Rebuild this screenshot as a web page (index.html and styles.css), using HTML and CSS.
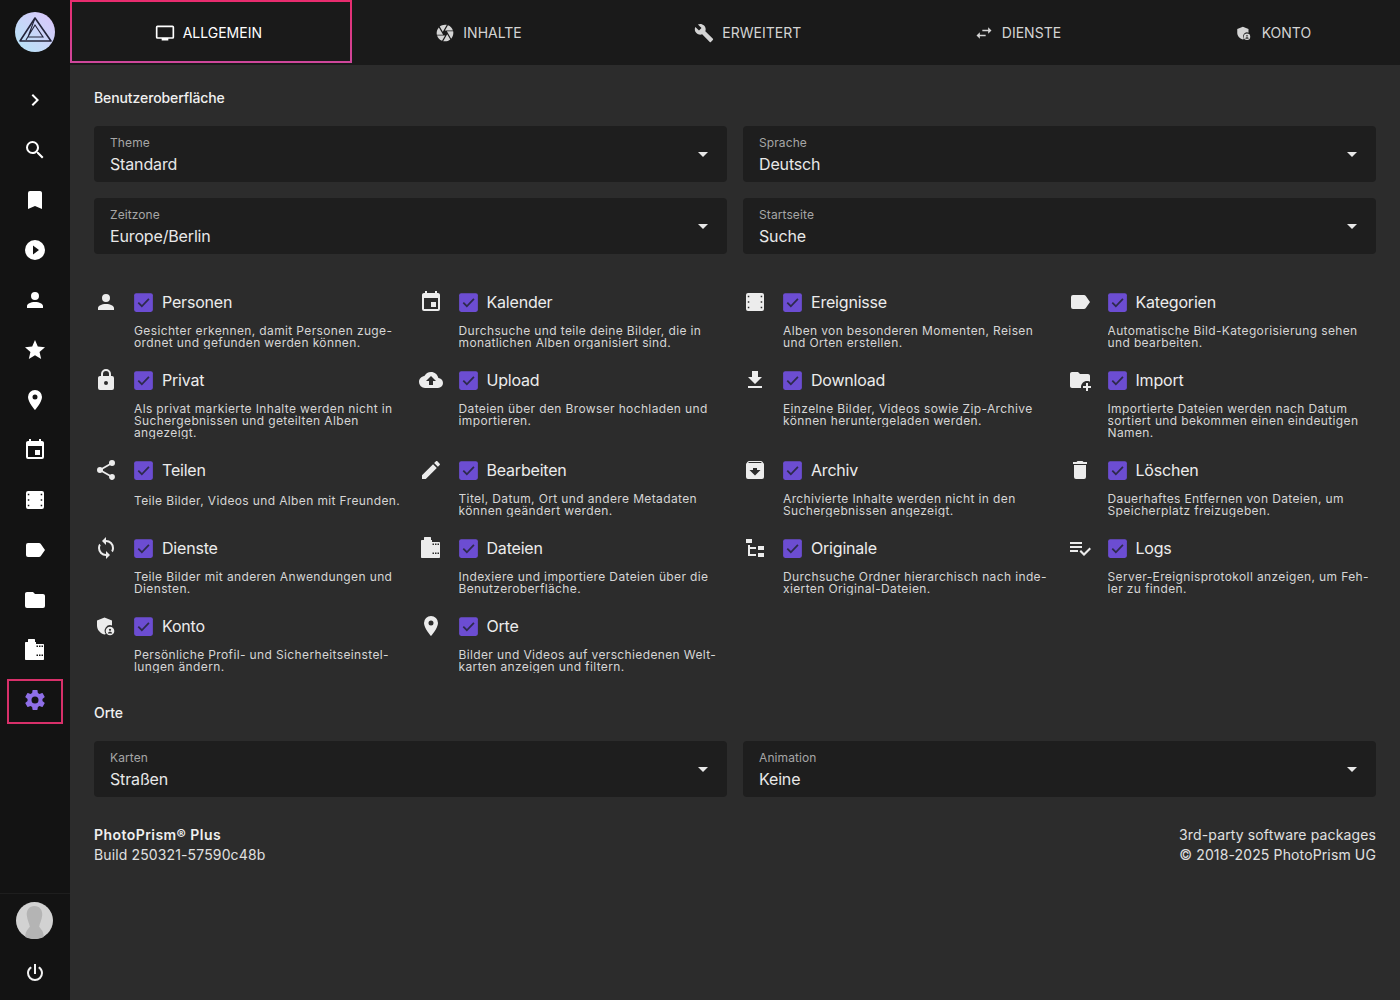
FILE: index.html
```html
<!DOCTYPE html>
<html lang="de">
<head>
    <meta charset="UTF-8">
    <title>PhotoPrism Einstellungen</title>
    <link rel="stylesheet" href="styles.css">
</head>
<body>
<svg class="sprite" xmlns="http://www.w3.org/2000/svg">
    <symbol id="i-chevron" viewBox="0 0 24 24"><path d="M8.59,16.58L13.17,12L8.59,7.41L10,6L16,12L10,18L8.59,16.58Z"/></symbol>
    <symbol id="i-search" viewBox="0 0 24 24"><path d="M9.5,3A6.5,6.5 0 0,1 16,9.5C16,11.11 15.41,12.59 14.44,13.73L14.71,14H15.5L20.5,19L19,20.5L14,15.5V14.71L13.73,14.44C12.59,15.41 11.11,16 9.5,16A6.5,6.5 0 0,1 3,9.5A6.5,6.5 0 0,1 9.5,3M9.5,5C7,5 5,7 5,9.5C5,12 7,14 9.5,14C12,14 14,12 14,9.5C14,7 12,5 9.5,5Z"/></symbol>
    <symbol id="i-bookmark" viewBox="0 0 24 24"><path d="M17,3H7A2,2 0 0,0 5,5V21L12,18L19,21V5C19,3.89 18.1,3 17,3Z"/></symbol>
    <symbol id="i-play" viewBox="0 0 24 24"><path d="M10,16.5V7.5L16,12M12,2A10,10 0 0,0 2,12A10,10 0 0,0 12,22A10,10 0 0,0 22,12A10,10 0 0,0 12,2Z"/></symbol>
    <symbol id="i-person" viewBox="0 0 24 24"><path d="M12,4A4,4 0 0,1 16,8A4,4 0 0,1 12,12A4,4 0 0,1 8,8A4,4 0 0,1 12,4M12,14C16.42,14 20,15.79 20,18V20H4V18C4,15.79 7.58,14 12,14Z"/></symbol>
    <symbol id="i-star" viewBox="0 0 24 24"><path d="M12,17.27L18.18,21L16.54,13.97L22,9.24L14.81,8.62L12,2L9.19,8.62L2,9.24L7.45,13.97L5.82,21L12,17.27Z"/></symbol>
    <symbol id="i-marker" viewBox="0 0 24 24"><path d="M12,11.5A2.5,2.5 0 0,1 9.5,9A2.5,2.5 0 0,1 12,6.5A2.5,2.5 0 0,1 14.5,9A2.5,2.5 0 0,1 12,11.5M12,2A7,7 0 0,0 5,9C5,14.25 12,22 12,22C12,22 19,14.25 19,9A7,7 0 0,0 12,2Z"/></symbol>
    <symbol id="i-calendar" viewBox="0 0 24 24"><path d="M19 19H5V8H19M16 1V3H8V1H6V3H5C3.89 3 3 3.89 3 5V19A2 2 0 0 0 5 21H19A2 2 0 0 0 21 19V5C21 3.89 20.1 3 19 3H18V1M17 12H12V17H17V12Z"/></symbol>
    <symbol id="i-movie" viewBox="0 0 24 24"><path fill-rule="evenodd" d="M5 3H19A2 2 0 0 1 21 5V19A2 2 0 0 1 19 21H5A2 2 0 0 1 3 19V5A2 2 0 0 1 5 3ZM4.8 5.8V7.3H6.3V5.8ZM4.8 11.25V12.75H6.3V11.25ZM4.8 16.7V18.2H6.3V16.7ZM17.7 5.8V7.3H19.2V5.8ZM17.7 11.25V12.75H19.2V11.25ZM17.7 16.7V18.2H19.2V16.7Z"/></symbol>
    <symbol id="i-label" viewBox="0 0 24 24"><path d="M17.63,5.84C17.27,5.33 16.67,5 16,5H5A2,2 0 0,0 3,7V17A2,2 0 0,0 5,19H16C16.67,19 17.27,18.66 17.63,18.15L22,12L17.63,5.84Z"/></symbol>
    <symbol id="i-folder" viewBox="0 0 24 24"><path d="M10,4H4C2.89,4 2,4.89 2,6V18A2,2 0 0,0 4,20H20A2,2 0 0,0 22,18V8C22,6.89 21.1,6 20,6H12L10,4Z"/></symbol>
    <symbol id="i-folder-plus" viewBox="0 0 24 24"><path d="M13 19C13 19.34 13.04 19.67 13.09 20H4C2.9 20 2 19.11 2 18V6C2 4.89 2.89 4 4 4H10L12 6H20C21.1 6 22 6.89 22 8V13.81C21.39 13.46 20.72 13.22 20 13.09C19.67 13.04 19.34 13 19 13C15.69 13 13 15.69 13 19M20 18V15H18V18H15V20H18V23H20V20H23V18H20Z"/></symbol>
    <symbol id="i-film" viewBox="0 0 24 24"><path fill-rule="evenodd" d="M3 4H5V1.6C5 1.3 5.3 1 5.6 1H11.4C11.7 1 12 1.3 12 1.6V4H13V6H20C20.6 6 21 6.4 21 7V21C21 21.6 20.6 22 20 22H3C2.4 22 2 21.6 2 21V5C2 4.4 2.4 4 3 4ZM13.5 7.5V9H15V7.5ZM16 7.5V9H17.5V7.5ZM18.5 7.5V9H20V7.5ZM13.5 16.5V18H15V16.5ZM16 16.5V18H17.5V16.5ZM18.5 16.5V18H20V16.5Z"/></symbol>
    <symbol id="i-cog" viewBox="0 0 24 24"><path d="M12,15.5A3.5,3.5 0 0,1 8.5,12A3.5,3.5 0 0,1 12,8.5A3.5,3.5 0 0,1 15.5,12A3.5,3.5 0 0,1 12,15.5M19.43,12.97C19.47,12.65 19.5,12.33 19.5,12C19.5,11.67 19.47,11.34 19.43,11L21.54,9.37C21.73,9.22 21.78,8.95 21.66,8.73L19.66,5.27C19.54,5.05 19.27,4.96 19.05,5.05L16.56,6.05C16.04,5.66 15.5,5.32 14.87,5.07L14.5,2.42C14.46,2.18 14.25,2 14,2H10C9.75,2 9.54,2.18 9.5,2.42L9.13,5.07C8.5,5.32 7.96,5.66 7.44,6.05L4.95,5.05C4.73,4.96 4.46,5.05 4.34,5.27L2.34,8.73C2.21,8.95 2.27,9.22 2.46,9.37L4.57,11C4.53,11.34 4.5,11.67 4.5,12C4.5,12.33 4.53,12.65 4.57,12.97L2.46,14.63C2.27,14.78 2.21,15.05 2.34,15.27L4.34,18.73C4.46,18.95 4.73,19.03 4.95,18.95L7.44,17.94C7.96,18.34 8.5,18.68 9.13,18.93L9.5,21.58C9.54,21.82 9.75,22 10,22H14C14.25,22 14.46,21.82 14.5,21.58L14.87,18.93C15.5,18.67 16.04,18.34 16.56,17.94L19.05,18.95C19.27,19.03 19.54,18.95 19.66,18.73L21.66,15.27C21.78,15.05 21.73,14.78 21.54,14.63L19.43,12.97Z"/></symbol>
    <symbol id="i-power" viewBox="0 0 24 24"><path d="M16.56,5.44L15.11,6.89C16.84,7.94 18,9.83 18,12A6,6 0 0,1 12,18A6,6 0 0,1 6,12C6,9.83 7.16,7.94 8.88,6.88L7.44,5.44C5.36,6.88 4,9.28 4,12A8,8 0 0,0 12,20A8,8 0 0,0 20,12C20,9.28 18.64,6.88 16.56,5.44M13,3H11V13H13"/></symbol>
    <symbol id="i-lock" viewBox="0 0 24 24"><path d="M12,17A2,2 0 0,0 14,15C14,13.89 13.1,13 12,13A2,2 0 0,0 10,15A2,2 0 0,0 12,17M18,8A2,2 0 0,1 20,10V20A2,2 0 0,1 18,22H6A2,2 0 0,1 4,20V10C4,8.89 4.9,8 6,8H7V6A5,5 0 0,1 12,1A5,5 0 0,1 17,6V8H18M12,3A3,3 0 0,0 9,6V8H15V6A3,3 0 0,0 12,3Z"/></symbol>
    <symbol id="i-share" viewBox="0 0 24 24"><path d="M18,16.08C17.24,16.08 16.56,16.38 16.04,16.85L8.91,12.7C8.96,12.47 9,12.24 9,12C9,11.76 8.96,11.53 8.91,11.3L15.96,7.19C16.5,7.69 17.21,8 18,8A3,3 0 0,0 21,5A3,3 0 0,0 18,2A3,3 0 0,0 15,5C15,5.24 15.04,5.47 15.09,5.7L8.04,9.81C7.5,9.31 6.79,9 6,9A3,3 0 0,0 3,12A3,3 0 0,0 6,15C6.79,15 7.5,14.69 8.04,14.19L15.16,18.34C15.11,18.55 15.08,18.77 15.08,19C15.08,20.61 16.39,21.91 18,21.91C19.61,21.91 20.92,20.61 20.92,19A2.92,2.92 0 0,0 18,16.08Z"/></symbol>
    <symbol id="i-sync" viewBox="0 0 24 24"><path d="M12,18A6,6 0 0,1 6,12C6,11 6.25,10.03 6.7,9.2L5.24,7.74C4.46,8.97 4,10.43 4,12A8,8 0 0,0 12,20V23L16,19L12,15M12,4V1L8,5L12,9V6A6,6 0 0,1 18,12C18,13 17.75,13.97 17.3,14.8L18.76,16.26C19.54,15.03 20,13.57 20,12A8,8 0 0,0 12,4Z"/></symbol>
    <symbol id="i-shield" viewBox="0 0 24 24"><path d="M10.5 3.5L3 6.5V11.5C3 15.7 6 19.3 10.5 20.5C11 20.4 11.4 20.2 11.8 20A5.5 5.5 0 0 1 18 11.5V6.5Z"/><circle cx="16" cy="17" r="4.3"/><circle cx="16" cy="15.8" r="1.1" fill="#2c2c2c"/><path d="M13.8 19.6C14 18.4 14.8 17.8 16 17.8S18 18.4 18.2 19.6Z" fill="#2c2c2c"/></symbol>
    <symbol id="i-cloud" viewBox="0 0 24 24"><path d="M14,13V17H10V13H7L12,8L17,13M19.35,10.03C18.67,6.59 15.64,4 12,4C9.11,4 6.6,5.64 5.35,8.03C2.34,8.36 0,10.9 0,14A6,6 0 0,0 6,20H19A5,5 0 0,0 24,15C24,12.36 21.95,10.22 19.35,10.03Z"/></symbol>
    <symbol id="i-download" viewBox="0 0 24 24"><path d="M5,20H19V18H5M19,9H15V3H9V9H5L12,16L19,9Z"/></symbol>
    <symbol id="i-pencil" viewBox="0 0 24 24"><path d="M20.71,7.04C21.1,6.65 21.1,6 20.71,5.63L18.37,3.29C18,2.9 17.35,2.9 16.96,3.29L15.12,5.12L18.87,8.87M3,17.25V21H6.75L17.81,9.93L14.06,6.18L3,17.25Z"/></symbol>
    <symbol id="i-archive" viewBox="0 0 24 24"><path d="M5.12,5L5.93,4H17.93L18.87,5M12,17.5L6.5,12H10V10H14V12H17.5L12,17.5M20.54,5.23L19.15,3.55C18.88,3.21 18.47,3 18,3H6C5.53,3 5.12,3.21 4.84,3.55L3.46,5.23C3.17,5.57 3,6 3,6.5V19A2,2 0 0,0 5,21H19A2,2 0 0,0 21,19V6.5C21,6 20.83,5.57 20.54,5.23Z"/></symbol>
    <symbol id="i-trash" viewBox="0 0 24 24"><path d="M19,4H15.5L14.5,3H9.5L8.5,4H5V6H19M6,19A2,2 0 0,0 8,21H16A2,2 0 0,0 18,19V7H6V19Z"/></symbol>
    <symbol id="i-tree" viewBox="0 0 24 24"><path d="M3,3H9V7H3V3M15,10H21V14H15V10M15,17H21V21H15V17M13,13H7V18H13V20H7L5,20V9H7V11H13V13Z"/></symbol>
    <symbol id="i-logs" viewBox="0 0 24 24"><path d="M14,10H2V12H14V10M14,6H2V8H14V6M2,16H10V14H2V16M21.5,11.5L23,13L16,20L11.5,15.5L13,14L16,17L21.5,11.5Z"/></symbol>
    <symbol id="i-monitor" viewBox="0 0 24 24"><path d="M21 17H3V5H21M21 3H3A2 2 0 0 0 1 5V17A2 2 0 0 0 3 19H8V21H16V19H21A2 2 0 0 0 23 17V5A2 2 0 0 0 21 3Z"/></symbol>
    <symbol id="i-iris" viewBox="0 0 24 24"><path d="M13.73,15L9.83,21.76C10.53,21.91 11.25,22 12,22C14.4,22 16.6,21.15 18.32,19.75L14.66,13.4M2.46,15C3.38,17.92 5.61,20.26 8.45,21.34L12.12,15M8.54,12L4.64,5.25C3,7 2,9.39 2,12C2,12.68 2.07,13.35 2.2,14H9.69M21.8,10H14.31L14.6,10.5L19.36,18.75C21,16.97 22,14.6 22,12C22,11.31 21.93,10.64 21.8,10M21.54,9C20.62,6.07 18.39,3.74 15.55,2.66L11.88,9M9.4,10.5L14.17,2.24C13.47,2.09 12.75,2 12,2C9.6,2 7.4,2.84 5.68,4.25L9.34,10.6L9.4,10.5Z"/></symbol>
    <symbol id="i-wrench" viewBox="0 0 24 24"><path d="M22.7,19L13.6,9.9C14.5,7.6 14,4.9 12.1,3C10.1,1 7.1,0.6 4.7,1.7L9,6L6,9L1.6,4.7C0.4,7.1 0.9,10.1 2.9,12.1C4.8,14 7.5,14.5 9.8,13.6L18.9,22.7C19.3,23.1 19.9,23.1 20.3,22.7L22.6,20.4C23.1,20 23.1,19.3 22.7,19Z"/></symbol>
    <symbol id="i-swap" viewBox="0 0 24 24"><path d="M21,9L17,5V8H10V10H17V13M7,11L3,15L7,19V16H14V14H7V11Z"/></symbol>
    <symbol id="i-menu-down" viewBox="0 0 24 24"><path d="M7,10L12,15L17,10H7Z"/></symbol>
    <symbol id="i-check" viewBox="0 0 24 24"><rect x="3" y="3" width="18" height="18" rx="2"/><path d="M7 12.2L10.4 15.6L17.2 8.6" fill="none" stroke="#2d2a4c" stroke-width="1.7"/></symbol>
</svg>

<nav class="sidebar">
    <div class="sidebar-logo">
        <svg class="logo" viewBox="0 0 40 40">
            <defs>
                <linearGradient id="logo-bg" x1="0" y1="1" x2="1" y2="0">
                    <stop offset="0" stop-color="#b5e6f7"/>
                    <stop offset="1" stop-color="#dcc4fa"/>
                </linearGradient>
            </defs>
            <circle cx="20" cy="20" r="20" fill="url(#logo-bg)"/>
            <path d="M20 6L36 29H5Z" fill="none" stroke="#24243a" stroke-width="1.6" stroke-linejoin="round"/>
            <path d="M20 6L13 25H28L20 13L11 28" fill="none" stroke="#24243a" stroke-width="1.1"/>
        </svg>
    </div>
    <ul class="nav-list">
        <li class="nav-item"><svg class="icon"><use href="#i-chevron"/></svg></li>
        <li class="nav-item"><svg class="icon"><use href="#i-search"/></svg></li>
        <li class="nav-item"><svg class="icon"><use href="#i-bookmark"/></svg></li>
        <li class="nav-item"><svg class="icon"><use href="#i-play"/></svg></li>
        <li class="nav-item"><svg class="icon"><use href="#i-person"/></svg></li>
        <li class="nav-item"><svg class="icon"><use href="#i-star"/></svg></li>
        <li class="nav-item"><svg class="icon"><use href="#i-marker"/></svg></li>
        <li class="nav-item"><svg class="icon"><use href="#i-calendar"/></svg></li>
        <li class="nav-item"><svg class="icon"><use href="#i-movie"/></svg></li>
        <li class="nav-item"><svg class="icon"><use href="#i-label"/></svg></li>
        <li class="nav-item"><svg class="icon"><use href="#i-folder"/></svg></li>
        <li class="nav-item"><svg class="icon"><use href="#i-film"/></svg></li>
        <li class="nav-item active"><svg class="icon"><use href="#i-cog"/></svg></li>
    </ul>
    <div class="sidebar-foot">
        <svg class="avatar" viewBox="0 0 36 36">
            <circle cx="18" cy="18" r="18" fill="#d2d2d2"/>
            <path d="M18 4C23 4 26 8 25.5 13C25 18 23 21 22.5 24C25 27 27 29 27 34C24 35.5 21 36 18 36S12 35.5 9 34C9 29 11 27 13.5 24C13 21 11 18 10.5 13C10 8 13 4 18 4Z" fill="#b4b4b4"/>
        </svg>
        <svg class="icon power"><use href="#i-power"/></svg>
    </div>
</nav>

<div class="page">
    <header class="tabs">
        <div class="tab active"><svg class="tab-icon"><use href="#i-monitor"/></svg>Allgemein</div>
        <div class="tab"><svg class="tab-icon"><use href="#i-iris"/></svg>Inhalte</div>
        <div class="tab"><svg class="tab-icon"><use href="#i-wrench"/></svg>Erweitert</div>
        <div class="tab"><svg class="tab-icon"><use href="#i-swap"/></svg>Dienste</div>
        <div class="tab"><svg class="tab-icon small"><use href="#i-shield"/></svg>Konto</div>
    </header>

    <main class="content">
        <h2 class="section-title">Benutzeroberfläche</h2>
        <div class="select-grid">
            <div class="select"><div><div class="select-label">Theme</div><div class="select-value">Standard</div></div><svg class="select-arrow"><use href="#i-menu-down"/></svg></div>
            <div class="select"><div><div class="select-label">Sprache</div><div class="select-value">Deutsch</div></div><svg class="select-arrow"><use href="#i-menu-down"/></svg></div>
            <div class="select"><div><div class="select-label">Zeitzone</div><div class="select-value">Europe/Berlin</div></div><svg class="select-arrow"><use href="#i-menu-down"/></svg></div>
            <div class="select"><div><div class="select-label">Startseite</div><div class="select-value">Suche</div></div><svg class="select-arrow"><use href="#i-menu-down"/></svg></div>
        </div>

        <div class="feature-grid">
            <div class="feature">
                <svg class="icon feature-icon"><use href="#i-person"/></svg>
                <div class="feature-body">
                    <div class="feature-head"><svg class="check"><use href="#i-check"/></svg>Personen</div>
                    <p class="feature-desc">Gesichter erkennen, damit Personen zuge-<br>ordnet und gefunden werden können.</p>
                </div>
            </div>
            <div class="feature">
                <svg class="icon feature-icon"><use href="#i-calendar"/></svg>
                <div class="feature-body">
                    <div class="feature-head"><svg class="check"><use href="#i-check"/></svg>Kalender</div>
                    <p class="feature-desc">Durchsuche und teile deine Bilder, die in<br>monatlichen Alben organisiert sind.</p>
                </div>
            </div>
            <div class="feature">
                <svg class="icon feature-icon"><use href="#i-movie"/></svg>
                <div class="feature-body">
                    <div class="feature-head"><svg class="check"><use href="#i-check"/></svg>Ereignisse</div>
                    <p class="feature-desc">Alben von besonderen Momenten, Reisen<br>und Orten erstellen.</p>
                </div>
            </div>
            <div class="feature">
                <svg class="icon feature-icon"><use href="#i-label"/></svg>
                <div class="feature-body">
                    <div class="feature-head"><svg class="check"><use href="#i-check"/></svg>Kategorien</div>
                    <p class="feature-desc">Automatische Bild-Kategorisierung sehen<br>und bearbeiten.</p>
                </div>
            </div>

            <div class="feature">
                <svg class="icon feature-icon"><use href="#i-lock"/></svg>
                <div class="feature-body">
                    <div class="feature-head"><svg class="check"><use href="#i-check"/></svg>Privat</div>
                    <p class="feature-desc">Als privat markierte Inhalte werden nicht in<br>Suchergebnissen und geteilten Alben<br>angezeigt.</p>
                </div>
            </div>
            <div class="feature">
                <svg class="icon feature-icon"><use href="#i-cloud"/></svg>
                <div class="feature-body">
                    <div class="feature-head"><svg class="check"><use href="#i-check"/></svg>Upload</div>
                    <p class="feature-desc">Dateien über den Browser hochladen und<br>importieren.</p>
                </div>
            </div>
            <div class="feature">
                <svg class="icon feature-icon"><use href="#i-download"/></svg>
                <div class="feature-body">
                    <div class="feature-head"><svg class="check"><use href="#i-check"/></svg>Download</div>
                    <p class="feature-desc">Einzelne Bilder, Videos sowie Zip-Archive<br>können heruntergeladen werden.</p>
                </div>
            </div>
            <div class="feature">
                <svg class="icon feature-icon"><use href="#i-folder-plus"/></svg>
                <div class="feature-body">
                    <div class="feature-head"><svg class="check"><use href="#i-check"/></svg>Import</div>
                    <p class="feature-desc">Importierte Dateien werden nach Datum<br>sortiert und bekommen einen eindeutigen<br>Namen.</p>
                </div>
            </div>

            <div class="feature">
                <svg class="icon feature-icon"><use href="#i-share"/></svg>
                <div class="feature-body">
                    <div class="feature-head"><svg class="check"><use href="#i-check"/></svg>Teilen</div>
                    <p class="feature-desc single">Teile Bilder, Videos und Alben mit Freunden.</p>
                </div>
            </div>
            <div class="feature">
                <svg class="icon feature-icon"><use href="#i-pencil"/></svg>
                <div class="feature-body">
                    <div class="feature-head"><svg class="check"><use href="#i-check"/></svg>Bearbeiten</div>
                    <p class="feature-desc">Titel, Datum, Ort und andere Metadaten<br>können geändert werden.</p>
                </div>
            </div>
            <div class="feature">
                <svg class="icon feature-icon"><use href="#i-archive"/></svg>
                <div class="feature-body">
                    <div class="feature-head"><svg class="check"><use href="#i-check"/></svg>Archiv</div>
                    <p class="feature-desc">Archivierte Inhalte werden nicht in den<br>Suchergebnissen angezeigt.</p>
                </div>
            </div>
            <div class="feature">
                <svg class="icon feature-icon"><use href="#i-trash"/></svg>
                <div class="feature-body">
                    <div class="feature-head"><svg class="check"><use href="#i-check"/></svg>Löschen</div>
                    <p class="feature-desc">Dauerhaftes Entfernen von Dateien, um<br>Speicherplatz freizugeben.</p>
                </div>
            </div>

            <div class="feature">
                <svg class="icon feature-icon"><use href="#i-sync"/></svg>
                <div class="feature-body">
                    <div class="feature-head"><svg class="check"><use href="#i-check"/></svg>Dienste</div>
                    <p class="feature-desc">Teile Bilder mit anderen Anwendungen und<br>Diensten.</p>
                </div>
            </div>
            <div class="feature">
                <svg class="icon feature-icon"><use href="#i-film"/></svg>
                <div class="feature-body">
                    <div class="feature-head"><svg class="check"><use href="#i-check"/></svg>Dateien</div>
                    <p class="feature-desc">Indexiere und importiere Dateien über die<br>Benutzeroberfläche.</p>
                </div>
            </div>
            <div class="feature">
                <svg class="icon feature-icon"><use href="#i-tree"/></svg>
                <div class="feature-body">
                    <div class="feature-head"><svg class="check"><use href="#i-check"/></svg>Originale</div>
                    <p class="feature-desc">Durchsuche Ordner hierarchisch nach inde-<br>xierten Original-Dateien.</p>
                </div>
            </div>
            <div class="feature">
                <svg class="icon feature-icon"><use href="#i-logs"/></svg>
                <div class="feature-body">
                    <div class="feature-head"><svg class="check"><use href="#i-check"/></svg>Logs</div>
                    <p class="feature-desc">Server-Ereignisprotokoll anzeigen, um Feh-<br>ler zu finden.</p>
                </div>
            </div>

            <div class="feature">
                <svg class="icon feature-icon"><use href="#i-shield"/></svg>
                <div class="feature-body">
                    <div class="feature-head"><svg class="check"><use href="#i-check"/></svg>Konto</div>
                    <p class="feature-desc">Persönliche Profil- und Sicherheitseinstel-<br>lungen ändern.</p>
                </div>
            </div>
            <div class="feature">
                <svg class="icon feature-icon"><use href="#i-marker"/></svg>
                <div class="feature-body">
                    <div class="feature-head"><svg class="check"><use href="#i-check"/></svg>Orte</div>
                    <p class="feature-desc">Bilder und Videos auf verschiedenen Welt-<br>karten anzeigen und filtern.</p>
                </div>
            </div>
        </div>

        <h2 class="section-title section-maps">Orte</h2>
        <div class="select-grid">
            <div class="select"><div><div class="select-label">Karten</div><div class="select-value">Straßen</div></div><svg class="select-arrow"><use href="#i-menu-down"/></svg></div>
            <div class="select"><div><div class="select-label">Animation</div><div class="select-value">Keine</div></div><svg class="select-arrow"><use href="#i-menu-down"/></svg></div>
        </div>

        <footer class="about">
            <div><strong>PhotoPrism® Plus</strong><br>Build 250321-57590c48b</div>
            <div class="about-right">3rd-party software packages<br>© 2018-2025 PhotoPrism UG</div>
        </footer>
    </main>
</div>
</body>
</html>
```

FILE: styles.css
```css
* { box-sizing: border-box; }
body {
    margin: 0;
    height: 1000px;
    display: flex;
    font-family: "Inter", "Liberation Sans", sans-serif;
    background: #2c2c2c;
    color: #e8e8e8;
    overflow: hidden;
}
.sprite { display: none; }
.icon { width: 24px; height: 24px; fill: currentColor; display: block; }

/* sidebar */
.sidebar {
    width: 70px;
    height: 1000px;
    flex: none;
    display: flex;
    flex-direction: column;
    background: #131313;
    color: #fff;
}
.sidebar-logo { height: 75px; padding: 12px 15px 0; }
.logo { width: 40px; height: 40px; display: block; }
.nav-list { list-style: none; margin: 0; padding: 0 1px 0 0; }
.nav-item {
    height: 50px;
    display: flex;
    align-items: center;
    justify-content: center;
}
.nav-item.active { color: #8f6fe8; align-items: flex-start; }
.nav-item.active .icon {
    box-sizing: content-box;
    padding: 7px 14px 10px;
    border: 2px solid #d8306a;
    margin-top: 4px;
}
.sidebar-foot {
    margin-top: auto;
    height: 107px;
    padding: 8px 1px 0 0;
    border-top: 1px solid #1e1e1e;
    display: flex;
    flex-direction: column;
    align-items: center;
}
.avatar { width: 37px; height: 37px; display: block; }
.power { margin-top: 22px; color: #f2f2f2; }

/* tabs */
.page { flex: 1; min-width: 0; display: flex; flex-direction: column; }
.tabs { height: 65px; display: flex; background: #1a1a1a; }
.tab {
    flex: 1 1 auto;
    height: 63px;
    padding: 2px 5px 0 0;
    display: flex;
    align-items: center;
    justify-content: center;
    gap: 8px;
    font-size: 14px;
    text-transform: uppercase;
    color: #d4d4d4;
}
.tab.active {
    flex-basis: 114px;
    color: #fff;
    padding: 2px 5px 0 0;
    border: 2px solid;
    border-image: linear-gradient(#e82c6e, #cf479c) 1;
}
.tab-icon { width: 20px; height: 20px; fill: currentColor; }
.tab-icon.small { padding: 1px; }

/* form */
.content { padding: 23px 24px 0; }
.section-title {
    margin: 0 0 18px;
    font-size: 14px;
    line-height: 20px;
    font-weight: 500;
    letter-spacing: -0.1px;
    color: #f0f0f0;
}
.section-maps { margin-top: 22px; }
.select-grid { display: grid; grid-template-columns: 1fr 1fr; gap: 16px; }
.select {
    height: 56px;
    padding: 9px 12px 0 16px;
    display: flex;
    justify-content: space-between;
    background: #1e1e1e;
    border-radius: 4px;
}
.select-label { font-size: 12px; line-height: 16px; letter-spacing: 0.1px; color: #a6a6a6; }
.select-value { font-size: 16px; line-height: 24px; margin-top: 1px; letter-spacing: -0.15px; color: #e8e8e8; }
.select-arrow { width: 24px; height: 24px; margin-top: 7px; fill: #e8e8e8; }

.feature-grid {
    display: grid;
    grid-template-columns: repeat(4, 1fr);
    margin: 25px -8px 0;
}
.feature { display: flex; padding: 0 0 8px 8px; }
.feature-icon { flex: none; margin: 11px 8px 0 0; color: #ececec; }
.feature-body { padding-left: 8px; min-width: 0; }
.feature-head {
    height: 46px;
    display: flex;
    align-items: center;
    gap: 6px;
    margin-left: -3px;
    font-size: 16px;
    letter-spacing: -0.2px;
    color: #ececec;
}
.check { width: 25px; height: 25px; fill: #6c4dd2; flex: none; }
.feature-desc {
    margin: 0;
    font-size: 12px;
    line-height: 12px;
    letter-spacing: 0.37px;
    color: #d6d6d6;
    white-space: nowrap;
    overflow: hidden;
}
.feature-desc.single { padding-top: 2px; }

.about {
    margin-top: 28px;
    display: flex;
    justify-content: space-between;
    font-size: 14px;
    line-height: 20px;
    letter-spacing: 0.13px;
    color: #e0e0e0;
}
.about strong { font-weight: 600; letter-spacing: 0.45px; color: #f0f0f0; }
.about-right { text-align: right; }
```
